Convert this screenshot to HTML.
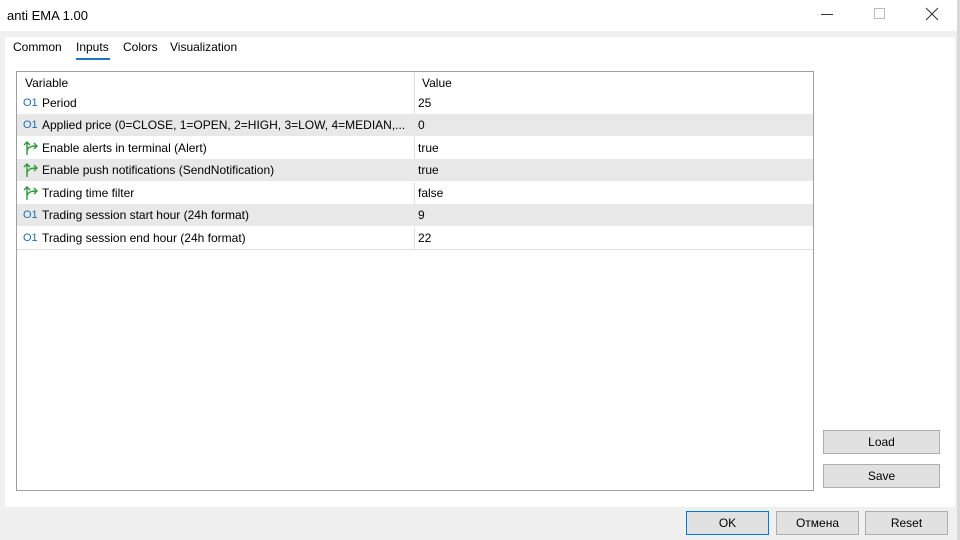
<!DOCTYPE html><html><head><style>
*{margin:0;padding:0;box-sizing:border-box}
body{width:960px;height:540px;background:#f0f0f0;font-family:"Liberation Sans",sans-serif;font-size:12px;color:#000;position:relative;overflow:hidden}
.abs{position:absolute}
.title{left:0;top:0;width:957px;height:31px;background:#fff}
.panel{left:5px;top:37px;width:950px;height:470px;background:#fff}
.tab{top:40px;font-size:12px}
.tbl{left:16px;top:71px;width:798px;height:420px;border:1px solid #a0a0a0;background:#fff}
.row{position:absolute;left:0;width:796px;height:23px;border-bottom:1px solid #fff}
.row.g{background:#e8e8e8}
.row span{position:absolute;top:4px}
.c1{left:25px}.c2{left:401px}
.o1{color:#1a6fb0;font-size:11px;top:5px!important;left:6px}
.row svg{position:absolute;left:5px;top:3px}
.btn{background:#e1e1e1;border:1px solid #adadad;text-align:center;line-height:22px}
</style></head><body>
<div class="abs title"></div>
<div class="abs" style="left:7px;top:8px;font-size:13px">anti EMA 1.00</div>
<div class="abs" style="left:821px;top:14px;width:12px;height:1px;background:#333"></div>
<div class="abs" style="left:874px;top:8px;width:11px;height:11px;border:1px solid #bbb"></div>
<svg class="abs" style="left:925px;top:7px" width="14" height="14"><path d="M1 1L13 13M13 1L1 13" stroke="#333" stroke-width="1"/></svg>
<div class="abs" style="left:957px;top:0;width:3px;height:540px;background:#d8d8d8"></div>
<div class="abs panel"></div>
<div class="abs tab" style="left:13px">Common</div>
<div class="abs tab" style="left:76px">Inputs</div>
<div class="abs" style="left:76px;top:58px;width:34px;height:2px;background:#1a73c4"></div>
<div class="abs tab" style="left:123px">Colors</div>
<div class="abs tab" style="left:170px">Visualization</div>
<div class="abs tbl">
<div class="row" style="top:0;height:20px"><span style="left:8px;top:4px">Variable</span><span class="c2" style="left:405px">Value</span></div>
<div class="abs" style="left:397px;top:0;width:1px;height:177px;background:#e0e0e0"></div>
<div class="row" style="top:20px"><span class="o1">O1</span><span class="c1">Period</span><span class="c2">25</span></div>
<div class="row g" style="top:42px"><span class="o1">O1</span><span class="c1">Applied price (0=CLOSE, 1=OPEN, 2=HIGH, 3=LOW, 4=MEDIAN,...</span><span class="c2">0</span></div>
<div class="row" style="top:65px"><svg width="17" height="16"><path d="M5 15V2M2 5l3-3 3 3M5 11c1-4 4-5 10-5M12 3l3 3-3 3" stroke="#2a9a3a" stroke-width="1.4" fill="none"/></svg><span class="c1">Enable alerts in terminal (Alert)</span><span class="c2">true</span></div>
<div class="row g" style="top:87px"><svg width="17" height="16"><path d="M5 15V2M2 5l3-3 3 3M5 11c1-4 4-5 10-5M12 3l3 3-3 3" stroke="#2a9a3a" stroke-width="1.4" fill="none"/></svg><span class="c1">Enable push notifications (SendNotification)</span><span class="c2">true</span></div>
<div class="row" style="top:110px"><svg width="17" height="16"><path d="M5 15V2M2 5l3-3 3 3M5 11c1-4 4-5 10-5M12 3l3 3-3 3" stroke="#2a9a3a" stroke-width="1.4" fill="none"/></svg><span class="c1">Trading time filter</span><span class="c2">false</span></div>
<div class="row g" style="top:132px"><span class="o1">O1</span><span class="c1">Trading session start hour (24h format)</span><span class="c2">9</span></div>
<div class="row" style="top:155px;border-bottom:1px solid #e0e0e0"><span class="o1">O1</span><span class="c1">Trading session end hour (24h format)</span><span class="c2">22</span></div>
</div>
<div class="abs btn" style="left:823px;top:430px;width:117px;height:24px">Load</div>
<div class="abs btn" style="left:823px;top:464px;width:117px;height:24px">Save</div>
<div class="abs btn" style="left:686px;top:511px;width:83px;height:24px;border:1px solid #0078d7">OK</div>
<div class="abs btn" style="left:776px;top:511px;width:83px;height:24px">Отмена</div>
<div class="abs btn" style="left:865px;top:511px;width:83px;height:24px">Reset</div>
</body></html>
